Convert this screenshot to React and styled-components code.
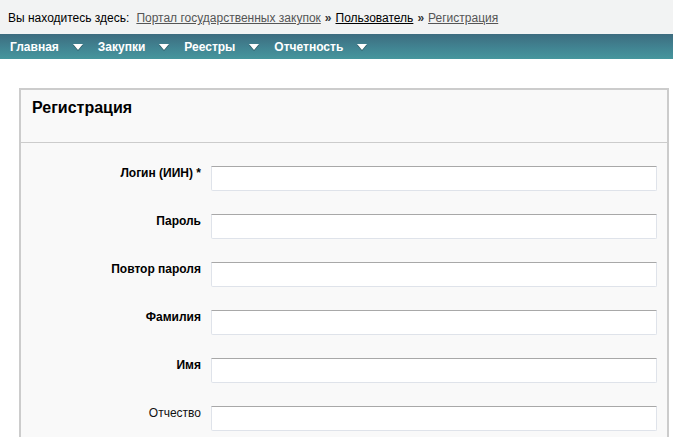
import React from "react"
import styled, { createGlobalStyle } from "styled-components"

const GlobalStyle = createGlobalStyle`
    body {
        margin: 0;
        background: #fff;
        font-family: "Liberation Sans", Arial, sans-serif;
        font-size: 12px;
        color: #000;
    }
`

const Breadcrumbs = styled.div`
    height: 34px;
    background: #f2f3f3;
    padding: 11px 0 0 8px;
    box-sizing: border-box;
    font-size: 12px;
    line-height: 14px;
    white-space: nowrap;
`

const Crumb = styled.a`
    color: ${(p) => (p.$dark ? "#000" : "#555")};
    text-decoration: underline;
    cursor: pointer;
`

const Sep = styled.span`
    margin: 0 4px;
    font-weight: bold;
    color: #333;
`

const Lead = styled.span`
    margin-right: 7px;
`

const NavBar = styled.nav`
    display: flex;
    align-items: center;
    height: 25px;
    padding-left: 10px;
    background: linear-gradient(to bottom, #3d6c7f 0%, #418492 55%, #46969d 100%);
`

const NavItem = styled.div`
    display: flex;
    align-items: center;
    color: #fff;
    font-weight: bold;
    font-size: 12px;
    margin-right: 15px;
    cursor: pointer;
`

const Arrow = styled.span`
    display: inline-block;
    width: 0;
    height: 0;
    margin-left: 14px;
    border-left: 5px solid transparent;
    border-right: 5px solid transparent;
    border-top: 6px solid #fff;
    filter: drop-shadow(0 1px 0 rgba(0, 0, 0, 0.35));
`

const Main = styled.main`
    padding: 29px 4px 0 19px;
`

const Panel = styled.section`
    border: 2px solid #cccccc;
    border-bottom: none;
    background: #f9f9f9;
    height: 360px;
    box-sizing: border-box;
`

const PanelHeader = styled.h1`
    margin: 0;
    height: 53px;
    box-sizing: border-box;
    padding: 9px 0 0 11px;
    font-size: 16px;
    font-weight: bold;
    border-bottom: 1px solid #cccccc;
`

const Form = styled.form`
    display: grid;
    grid-template-columns: 180px 1fr;
    column-gap: 10px;
    row-gap: 23px;
    padding: 23px 10px 0 0;
`

const Label = styled.label`
    text-align: right;
    font-weight: ${(p) => (p.$light ? "normal" : "bold")};
    color: ${(p) => (p.$light ? "#111" : "#000")};
    font-size: 12px;
    line-height: 14px;
`

const Input = styled.input`
    height: 25px;
    box-sizing: border-box;
    border: 1px solid #dfe3ea;
    border-top-color: #a8a8a8;
    border-radius: 0 0 2px 2px;
    background: #fff;
    margin: 0;
    padding: 2px 4px;
    font-family: inherit;
    font-size: 12px;
    outline: none;
`

const fields = [
    { label: "Логин (ИИН) *" },
    { label: "Пароль", type: "password" },
    { label: "Повтор пароля", type: "password" },
    { label: "Фамилия" },
    { label: "Имя" },
    { label: "Отчество", light: true },
]

const menu = ["Главная", "Закупки", "Реестры", "Отчетность"]

export default function App() {
    return (
        <>
            <GlobalStyle />
            <Breadcrumbs>
                <Lead>Вы находитесь здесь:</Lead>
                <Crumb>Портал государственных закупок</Crumb>
                <Sep>»</Sep>
                <Crumb $dark>Пользователь</Crumb>
                <Sep>»</Sep>
                <Crumb>Регистрация</Crumb>
            </Breadcrumbs>
            <NavBar>
                {menu.map((m) => (
                    <NavItem key={m}>
                        {m}
                        <Arrow />
                    </NavItem>
                ))}
            </NavBar>
            <Main>
                <Panel>
                    <PanelHeader>Регистрация</PanelHeader>
                    <Form>
                        {fields.map((f) => (
                            <React.Fragment key={f.label}>
                                <Label $light={f.light}>{f.label}</Label>
                                <Input type={f.type || "text"} />
                            </React.Fragment>
                        ))}
                    </Form>
                </Panel>
            </Main>
        </>
    )
}
